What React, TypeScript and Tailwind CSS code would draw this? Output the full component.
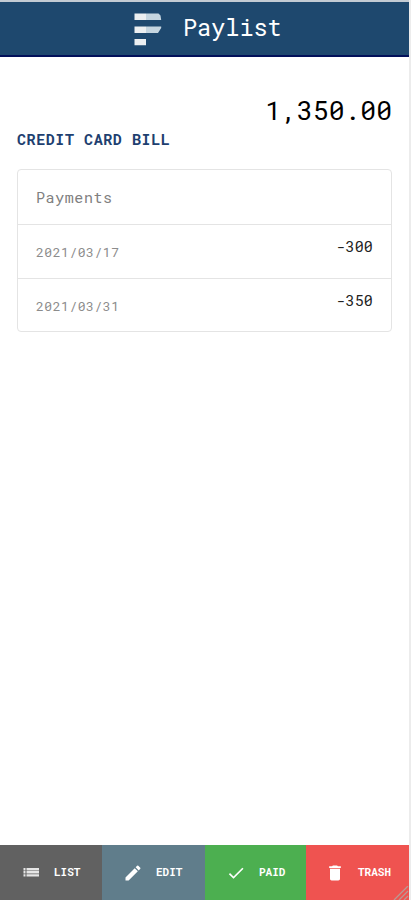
import React from "react";
import { MdCheck, MdDelete, MdEdit } from "react-icons/md";

type Payment = { date: string; amount: string };

const payments: Payment[] = [
  { date: "2021/03/17", amount: "-300" },
  { date: "2021/03/31", amount: "-350" },
];

function ListIcon() {
  return (
    <svg width="20" height="20" viewBox="0 0 20 20" fill="#e6e6e6">
      <path d="M2.5 5h2v2.4h-2zM2.5 8.1h2v2.4h-2zM2.5 11.2h2v2.4h-2zM5.5 5H18v2.4H5.5zM5.5 8.1H18v2.4H5.5zM5.5 11.2H18v2.4H5.5z" />
    </svg>
  );
}

const actions = [
  { label: "LIST", icon: <ListIcon />, className: "w-[102px] gap-[13px] pl-[21px] bg-[#616161]" },
  { label: "EDIT", icon: <MdEdit size={20} />, className: "w-[103px] gap-[13px] pl-[21px] bg-[#607d8b]" },
  { label: "PAID", icon: <MdCheck size={20} />, className: "w-[101px] gap-[13px] pl-[21px] bg-[#4caf50]" },
  { label: "TRASH", icon: <MdDelete size={20} />, className: "flex-1 gap-[13px] pl-[19px] bg-[#ef5350]" },
];

function Logo() {
  return (
    <svg width="28" height="34" viewBox="0 0 28 34">
      <path d="M.5 1.5h11.5v6.5H.5zM.5 14.5h11.5v6.5H.5zM.5 27h11.5v6.3H.5z" fill="#eceff1" />
      <path d="M12 1.5h12.5l2 2 .7 4.5H12zM12 14.5h15.2v1.5L24 21H12z" fill="#c5d5e0" />
    </svg>
  );
}

export default function App() {
  return (
    <div className="flex h-[900px] w-[411px] flex-col border-r-2 border-[#ececec] bg-white font-['Roboto_Mono','DejaVu_Sans_Mono',monospace]">
      <header className="flex h-[57px] shrink-0 items-center border-t-2 border-b-2 border-t-[#c3cbd3] border-b-[#02105a] bg-[#1e486e] pl-[134px]">
        <Logo />
        <h1 className="-mt-[3px] ml-[21px] text-[23.5px] leading-none text-white">Paylist</h1>
      </header>

      <main className="flex-1 pt-[38px] pr-[17px] pl-[17px]">
        <p className="text-right text-[26.4px] leading-[30px] text-black">1,350.00</p>
        <h2 className="pt-1 text-[15px] leading-5 font-bold tracking-[0.58px] text-[#1e3f70]">CREDIT CARD BILL</h2>
        <section className="mt-5 rounded border border-[#e4e4e4]">
          <div className="flex h-[54px] items-center px-[18px] text-[15px] tracking-[0.58px] text-[#808080]">Payments</div>
          {payments.map((p) => (
            <div key={p.date} className="flex h-[54px] justify-between border-t border-[#e4e4e4] px-[18px] last:h-[53px]">
              <span className="pt-[17px] text-[13px] leading-5 tracking-[0.55px] text-[#8c8c8c]">{p.date}</span>
              <span className="pt-[11px] text-[15px] leading-5 tracking-[0.15px] text-[#222]">{p.amount}</span>
            </div>
          ))}
        </section>
      </main>

      <footer className="relative flex h-[55px] shrink-0 text-white">
        {actions.map((a) => (
          <button key={a.label} className={`flex items-center text-[11px] font-bold ${a.className}`}>
            {a.icon}
            <span>{a.label}</span>
          </button>
        ))}
        <svg className="absolute right-0 bottom-0" width="16" height="14" viewBox="0 0 16 14">
          <path d="M1 14L15 0M6 14L15 5M11 14l4-4" stroke="#b99a94" strokeWidth="1.3" />
        </svg>
      </footer>
    </div>
  );
}
